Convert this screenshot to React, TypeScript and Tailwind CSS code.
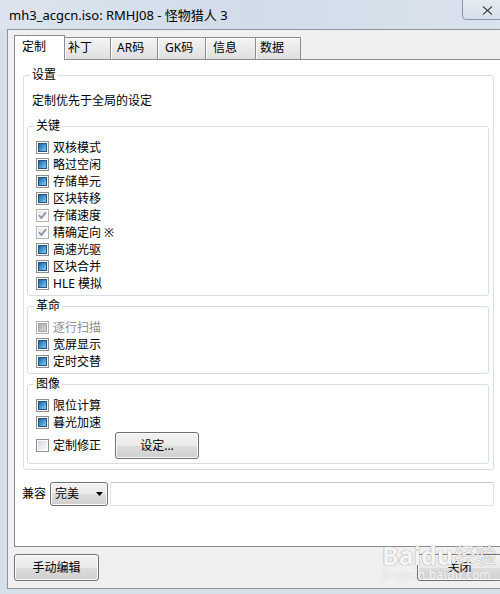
import React from 'react';

type Kind = 'fill' | 'check' | 'off' | 'dim';

// 13x13 Win7 style check box glyphs
const CheckGlyph: React.FC<{ kind: Kind }> = ({ kind }) => {
  const dim = kind === 'dim' || kind === 'check';
  return (
    <svg width="13" height="13" viewBox="0 0 13 13" className="shrink-0">
      <defs>
        <linearGradient id={`bg-${kind}`} x1="0" y1="0" x2="1" y2="1">
          <stop offset="0" stopColor={dim ? '#e6e6e6' : '#d6d9de'} />
          <stop offset="1" stopColor="#fbfbfb" />
        </linearGradient>
        <linearGradient id="blue" x1="0" y1="0" x2="1" y2="1">
          <stop offset="0" stopColor="#1f5c9c" />
          <stop offset="0.45" stopColor="#3f93d0" />
          <stop offset="1" stopColor="#8fd3f7" />
        </linearGradient>
        <linearGradient id="grey" x1="0" y1="0" x2="1" y2="1">
          <stop offset="0" stopColor="#a9a9a9" />
          <stop offset="1" stopColor="#dcdcdc" />
        </linearGradient>
      </defs>
      <rect x="0.5" y="0.5" width="12" height="12" fill="#fff" stroke={dim ? '#b3b3b3' : '#8e8f8f'} />
      <rect x="2" y="2" width="9" height="9" fill={`url(#bg-${kind})`} />
      {kind === 'fill' && <rect x="2.5" y="2.5" width="8" height="8" fill="url(#blue)" stroke="#27517f" />}
      {kind === 'dim' && <rect x="2.5" y="2.5" width="8" height="8" fill="url(#grey)" stroke="#a3a3a3" />}
      {kind === 'check' && (
        <path d="M3 6.3 L5.4 9 L10 3.2" fill="none" stroke="#7d8ea6" strokeWidth="1.7" />
      )}
    </svg>
  );
};

const Row: React.FC<{ kind: Kind; label: string; disabled?: boolean }> = ({ kind, label, disabled }) => (
  <div className="flex h-[17px] items-center">
    <CheckGlyph kind={kind} />
    <span className={`ml-[4px] leading-[16px] ${disabled ? 'text-[#8d8d8d]' : 'text-black'}`}>{label}</span>
  </div>
);

const Group: React.FC<{ title: string; className?: string; children: React.ReactNode }> = ({ title, className, children }) => (
  <fieldset className={`rounded-[3px] border border-[#d5dfe5] ${className ?? ''}`}>
    <legend className="ml-[6px] px-[2px] leading-[16px]">{title}</legend>
    {children}
  </fieldset>
);

const tabs = [
  { label: '定制', w: 'w-[51px]', pl: 'pl-[7px]', active: true },
  { label: '补丁', w: 'w-[47px]', pl: 'pl-[3px]' },
  { label: 'AR码', w: 'w-[48px]', pl: 'pl-[6px]' },
  { label: 'GK码', w: 'w-[49px]', pl: 'pl-[7px]' },
  { label: '信息', w: 'w-[51px]', pl: 'pl-[7px]' },
  { label: '数据', w: 'w-[46px]', pl: 'pl-[4px]' },
];

const keyRows: { kind: Kind; label: string }[] = [
  { kind: 'fill', label: '双核模式' },
  { kind: 'fill', label: '略过空闲' },
  { kind: 'fill', label: '存储单元' },
  { kind: 'fill', label: '区块转移' },
  { kind: 'check', label: '存储速度' },
  { kind: 'check', label: '精确定向 ※' },
  { kind: 'fill', label: '高速光驱' },
  { kind: 'fill', label: '区块合并' },
  { kind: 'fill', label: 'HLE 模拟' },
];

const btn =
  'rounded-[3px] border border-[#707070] bg-[linear-gradient(#f2f2f2,#ebebeb_50%,#dddddd_50%,#cfcfcf)] shadow-[inset_0_0_0_1px_#fbfbfb] leading-[16px] text-black';

export default function App() {
  return (
    <div className="relative h-[594px] w-[500px] overflow-hidden bg-[#d5e0eb] font-['Noto_Sans','Noto_Sans_CJK_SC',sans-serif] text-[12px] text-black">
      {/* title bar */}
      <div className="relative flex h-[29px] items-center bg-linear-to-r from-[#dbe4ee] via-[#d1dce8] to-[#dae3ed] pl-[9px] text-[13px]">
        <span className="leading-[16px]">mh3_acgcn.iso: RMHJ08 - 怪物猎人 3</span>
        <div className="absolute left-[462px] top-[-7px] flex h-[27px] w-[60px] items-end rounded-bl-[4px] border border-[#8896a6] bg-linear-to-b from-[#e9eef4] to-[#d6e0ea] pb-[4px] pl-[19px]">
          <svg width="11" height="9" viewBox="0 0 11 9">
            <path d="M1 0.5 L10 8.5 M10 0.5 L1 8.5" stroke="#fff" strokeWidth="3" />
            <path d="M1 0.5 L10 8.5 M10 0.5 L1 8.5" stroke="#3b4350" strokeWidth="1.4" />
          </svg>
        </div>
      </div>

      {/* client area */}
      <div className="ml-[7px] h-[560px] border-t border-b border-l border-[#8e949b] bg-[#f0f0f0] pl-[6px] pt-[5px]">
        {/* tabs */}
        <div className="flex h-[24px] items-end">
          {tabs.map((t) =>
            t.active ? (
              <div
                key={t.label}
                className={`relative z-10 -mb-[1px] h-[25px] ${t.w} ${t.pl} border-t border-r border-l border-[#898c95] bg-white pt-[3px] leading-[16px]`}
              >
                {t.label}
              </div>
            ) : (
              <div
                key={t.label}
                className={`-ml-[1px] h-[22px] ${t.w} ${t.pl} border-t border-r border-l border-[#898c95] bg-linear-to-b from-[#f4f4f4] to-[#dfdfdf] pt-[2px] leading-[16px] shadow-[inset_1px_1px_0_#fcfcfc]`}
              >
                {t.label}
              </div>
            ),
          )}
        </div>

        {/* tab panel */}
        <div className="h-[488px] w-[490px] border border-[#898c95] bg-white">
          <Group title="设置" className="ml-[8px] mt-[7px] w-[471px] pb-[5px]">
            <div className="pl-[8px] pt-[10px] leading-[16px]">定制优先于全局的设定</div>
            <Group title="关键" className="ml-[3px] mt-[9px] w-[462px]">
              <div className="pb-[3px] pl-[8px] pt-[5px]">
                {keyRows.map((r) => (
                  <Row key={r.label} kind={r.kind} label={r.label} />
                ))}
              </div>
            </Group>
            <Group title="革命" className="ml-[3px] mt-[2px] w-[462px]">
              <div className="pb-[3px] pl-[8px] pt-[5px]">
                <Row kind="dim" label="逐行扫描" disabled />
                <Row kind="fill" label="宽屏显示" />
                <Row kind="fill" label="定时交替" />
              </div>
            </Group>
            <Group title="图像" className="ml-[3px] mt-[2px] w-[462px]">
              <div className="pb-[4px] pl-[8px] pt-[5px]">
                <Row kind="fill" label="限位计算" />
                <Row kind="fill" label="暮光加速" />
                <div className="mt-[1px] flex h-[27px] items-center">
                  <CheckGlyph kind="off" />
                  <span className="ml-[4px] leading-[16px]">定制修正</span>
                  <button className={`ml-[14px] h-[27px] w-[84px] ${btn}`}>设定...</button>
                </div>
              </div>
            </Group>
          </Group>

          {/* compatibility */}
          <div className="mt-[12px] flex items-center pl-[7px]">
            <span className="w-[24px] leading-[16px]">兼容</span>
            <div className={`ml-[4px] flex h-[24px] w-[58px] items-center justify-between pl-[4px] pr-[4px] ${btn}`}>
              <span>完美</span>
              <svg width="7" height="4" viewBox="0 0 7 4">
                <path d="M0 0 H7 L3.5 4 Z" fill="#000" />
              </svg>
            </div>
            <div className="ml-[2px] h-[24px] w-[384px] rounded-[2px] border border-[#dfe3e8] border-t-[#c3c7cc] bg-white" />
          </div>
        </div>

        {/* bottom buttons */}
        <div className="mt-[7px] flex w-[490px] justify-between pr-[2px]">
          <button className={`h-[27px] w-[85px] ${btn}`}>手动编辑</button>
          <button className={`h-[27px] w-[85px] ${btn}`}>关闭</button>
        </div>
      </div>

      {/* watermark */}
      <div className="pointer-events-none absolute left-[382px] top-[542px] text-white/90">
        <div className="flex items-end leading-[26px]">
          <span className="text-[25px] font-bold [text-shadow:0_0_1px_#9a9a9a,0_0_1px_#9a9a9a]">Baidu</span>
          <span className="ml-[1px] text-[21px] [text-shadow:0_0_1px_#9a9a9a,0_0_1px_#9a9a9a]">经验</span>
        </div>
        <div className="text-[12px] leading-[14px] tracking-[0.3px] [text-shadow:0_0_1px_#b0b0b0]">jingyan.baidu.com</div>
      </div>
    </div>
  );
}
